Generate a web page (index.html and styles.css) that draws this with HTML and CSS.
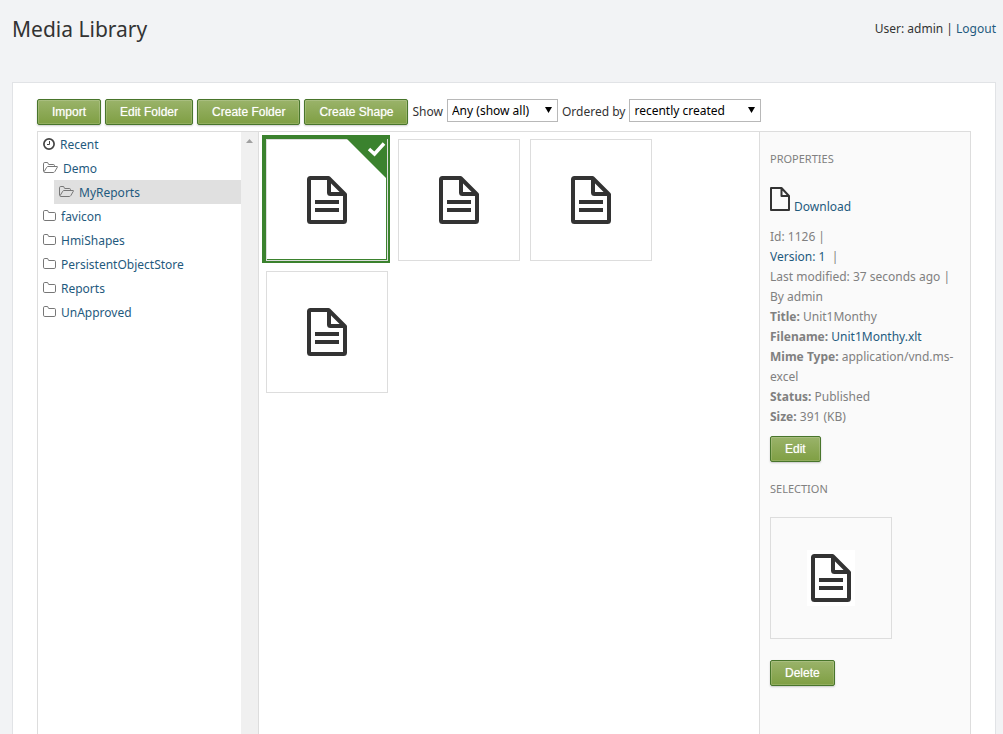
FILE: index.html
```html
<!DOCTYPE html>
<html lang="en">
<head>
<meta charset="utf-8">
<title>Media Library</title>
<link rel="stylesheet" href="styles.css">
</head>
<body>
<svg class="sprite" aria-hidden="true">
  <symbol id="folder" viewBox="0 0 13 11"><path d="M.5 1.8Q.5.5 1.8.5H4Q5.2.5 5.2 1.5 5.2 2.500 6 2.500H11.2Q12.5 2.500 12.5 3.5V9.2Q12.5 10.5 11.2 10.5H1.8Q.5 10.5.5 9.2Z" fill="none" stroke="currentColor"/></symbol>
  <symbol id="folder-open" viewBox="0 0 15 11"><path d="M.5 9.5V1.8Q.5.5 1.8.5H4Q5.2.5 5.2 1.5 5.2 2.500 6 2.500H10.2Q11.5 2.500 11.5 3.5V4.5M1 9.8 3.7 5.3Q4.2 4.5 5 4.5H14Q14.8 4.5 14.3 5.3L11.8 9.6Q11.2 10.5 10.3 10.5H1.8Q.8 10.5 1 9.8Z" fill="none" stroke="currentColor"/></symbol>
  <symbol id="clock" viewBox="0 0 12 12"><circle cx="6" cy="6" r="5.1" fill="none" stroke="currentColor" stroke-width="1.7"/><path d="M6.5 3V6.5H4" fill="none" stroke="currentColor"/></symbol>
  <symbol id="document" viewBox="0 0 40 48"><path d="M2 3.5Q2 2 3.5 2H21.5L38 18.5V44.5Q38 46 36.5 46H3.5Q2 46 2 44.5ZM22 2V16.5Q22 18 23.5 18H38" fill="none" stroke="currentColor" stroke-width="4" stroke-linejoin="round"/><path d="M10 26H30M10 34H30" stroke="currentColor" stroke-width="4" stroke-linecap="square"/></symbol>
</svg>
<header class="header">
  <h1 class="title">Media Library</h1>
  <div class="user">User: admin | <a href="#">Logout</a></div>
</header>
<main class="panel">
  <div class="toolbar">
    <button class="btn" type="button">Import</button>
    <button class="btn" type="button">Edit Folder</button>
    <button class="btn" type="button">Create Folder</button>
    <button class="btn" type="button">Create Shape</button>
    <label for="show">Show</label>
    <span class="select select-show"><select id="show"><option>Any (show all)</option></select><svg class="arrow" viewBox="0 0 7 6"><path d="M0 0H7L3.5 6Z"/></svg></span>
    <label for="order">Ordered by</label>
    <span class="select select-order"><select id="order"><option>recently created</option></select><svg class="arrow" viewBox="0 0 7 6"><path d="M0 0H7L3.5 6Z"/></svg></span>
  </div>
  <div class="columns">
    <nav class="tree">
      <div class="tree-list">
        <a class="node" href="#"><svg class="icon-clock"><use href="#clock"/></svg>Recent</a>
        <a class="node" href="#"><svg class="icon-open"><use href="#folder-open"/></svg>Demo</a>
        <a class="node node-active" href="#"><svg class="icon-open"><use href="#folder-open"/></svg>MyReports</a>
        <a class="node" href="#"><svg class="icon-folder"><use href="#folder"/></svg>favicon</a>
        <a class="node" href="#"><svg class="icon-folder"><use href="#folder"/></svg>HmiShapes</a>
        <a class="node" href="#"><svg class="icon-folder"><use href="#folder"/></svg>PersistentObjectStore</a>
        <a class="node" href="#"><svg class="icon-folder"><use href="#folder"/></svg>Reports</a>
        <a class="node" href="#"><svg class="icon-folder"><use href="#folder"/></svg>UnApproved</a>
      </div>
      <div class="scrollbar"><svg class="scroll-up" viewBox="0 0 7 4"><path d="M0 4 3.5 0 7 4Z" fill="#a0a0a0"/></svg></div>
    </nav>
    <section class="gallery" aria-label="Media">
      <button class="tile tile-selected" type="button" aria-label="Unit1Monthy, selected"><svg class="doc"><use href="#document"/></svg><svg class="corner" viewBox="0 0 40 40"><path d="M0 0H40V40Z" fill="#3b822e"/><path d="M22 10 27.500 15 37 4.500" fill="none" stroke="#fff" stroke-width="3.500"/></svg></button>
      <button class="tile" type="button" aria-label="Document 2"><svg class="doc"><use href="#document"/></svg></button>
      <button class="tile" type="button" aria-label="Document 3"><svg class="doc"><use href="#document"/></svg></button>
      <button class="tile" type="button" aria-label="Document 4"><svg class="doc"><use href="#document"/></svg></button>
    </section>
    <aside class="details">
      <h2 class="heading">PROPERTIES</h2>
      <a class="download" href="#"><svg class="file" viewBox="0 0 20 24"><path d="M1 1H11.500L19 9V23H1ZM11.500 1V9H19" fill="none" stroke="#333" stroke-width="2" stroke-linejoin="round"/></svg>Download</a>
      <div class="facts">
        <div>Id: 1126 |</div>
        <div><a href="#">Version: 1</a> &nbsp;|</div>
        <div>Last modified: 37 seconds ago |<br>By admin</div>
        <div><b>Title:</b> Unit1Monthy</div>
        <div><b>Filename:</b> <a href="#">Unit1Monthy.xlt</a></div>
        <div><b>Mime Type:</b> application/vnd.ms-excel</div>
        <div><b>Status:</b> Published</div>
        <div><b>Size:</b> 391 (KB)</div>
      </div>
      <button class="btn" type="button">Edit</button>
      <h2 class="heading heading-selection">SELECTION</h2>
      <div class="tile tile-preview"><span class="sheet"><svg class="doc"><use href="#document"/></svg></span></div>
      <button class="btn" type="button">Delete</button>
    </aside>
  </div>
</main>
</body>
</html>
```

FILE: styles.css
```css
* { box-sizing: border-box; }
body {
  margin: 0;
  min-height: 100vh;
  display: flex;
  flex-direction: column;
  padding: 0 7px 0 12px;
  background: #f2f3f5;
  color: #333;
  font: 12px/20px "Noto Sans", sans-serif;
}
a { color: #1f5a7e; text-decoration: none; }
.sprite { display: none; }
svg { display: block; flex: none; }
.header {
  display: flex;
  justify-content: space-between;
  height: 82px;
  padding-top: 13px;
}
.title { margin: 0; font-size: 21px; line-height: 32px; font-weight: 400; }
.user { padding-top: 6px; }
.panel {
  flex: 1;
  display: flex;
  flex-direction: column;
  padding: 16px 24px 0;
  border: 1px solid #e1e3e6;
  border-bottom: 0;
  background: #fff;
}
.toolbar {
  display: flex;
  flex-wrap: wrap;
  align-items: flex-start;
  gap: 4px;
  min-height: 32px;
  line-height: 26px;
}
.btn {
  height: 26px;
  padding: 0 14px;
  border: 1px solid #48752b;
  border-radius: 2px;
  background: linear-gradient(#9ab36a, #7f9f43);
  box-shadow: inset 0 0 0 1px #ffffff26, 0 1px 2px #0003;
  color: #fff;
  font: 12px/16px "Liberation Sans", Arial, sans-serif;
  text-shadow: 0 0 1px #fff9;
}
.select { position: relative; }
.select select {
  appearance: none;
  width: 100%;
  height: 23px;
  padding: 0 4px;
  border: 1px solid #b8b8b8;
  border-radius: 0;
  background: #fff;
  color: #000;
  font: 12px/20px "Noto Sans", sans-serif;
  display: block;
}
.select-show { width: 111px; }
.select-order { width: 132px; }
.arrow { position: absolute; right: 6px; top: 8px; width: 7px; height: 6px; pointer-events: none; }
.columns {
  flex: 1;
  display: grid;
  grid-template-columns: 220px 1fr 211px;
  border: 1px solid #ddd;
  border-bottom: 0;
}
.tree { display: flex; }
.tree-list { flex: 1; }
.node {
  display: flex;
  align-items: flex-start;
  gap: 5px;
  height: 24px;
  padding: 3px 0 0 5px;
}
.node svg { margin-top: 3px; color: #777; }
.node .icon-clock { color: #444; }
.node-active { margin-left: 16px; background: #e0e0e0; }
.icon-clock { width: 12px; height: 12px; }
.icon-folder { width: 13px; height: 11px; }
.icon-open { width: 15px; height: 11px; }
.scrollbar { width: 17px; padding: 7px 5px; background: #f0f0f0; }
.scroll-up { width: 7px; height: 4px; }
.gallery {
  display: flex;
  flex-wrap: wrap;
  align-content: flex-start;
  gap: 10px;
  padding: 7px;
  border-left: 1px solid #ddd;
}
.tile {
  position: relative;
  display: flex;
  align-items: center;
  justify-content: center;
  width: 122px;
  height: 122px;
  padding: 0;
  border: 1px solid #ddd;
  background: none;
  color: #333;
}
.tile-selected { box-shadow: -1px -1px 0 3px #3b822e, inset -1px -1px 0 #3b822e; }
.corner { position: absolute; top: -1px; right: 0; width: 40px; height: 40px; }
.doc { width: 40px; height: 48px; }
.details {
  padding: 18px 10px;
  border-left: 1px solid #ddd;
  background: #fafafa;
  color: #808080;
}
.heading { margin: 0 0 18px; font-size: 11px; line-height: 18px; font-weight: 400; }
.download { display: flex; align-items: flex-end; gap: 4px; height: 31px; margin-bottom: 10px; }
.file { width: 20px; height: 24px; margin-bottom: 6px; }
.facts { margin-bottom: 9px; }
.facts b { font-weight: 700; }
.heading-selection { margin-top: 18px; margin-bottom: 19px; }
.tile-preview { margin-bottom: 21px; }
.sheet { padding: 4px; background: #fff; }
```
